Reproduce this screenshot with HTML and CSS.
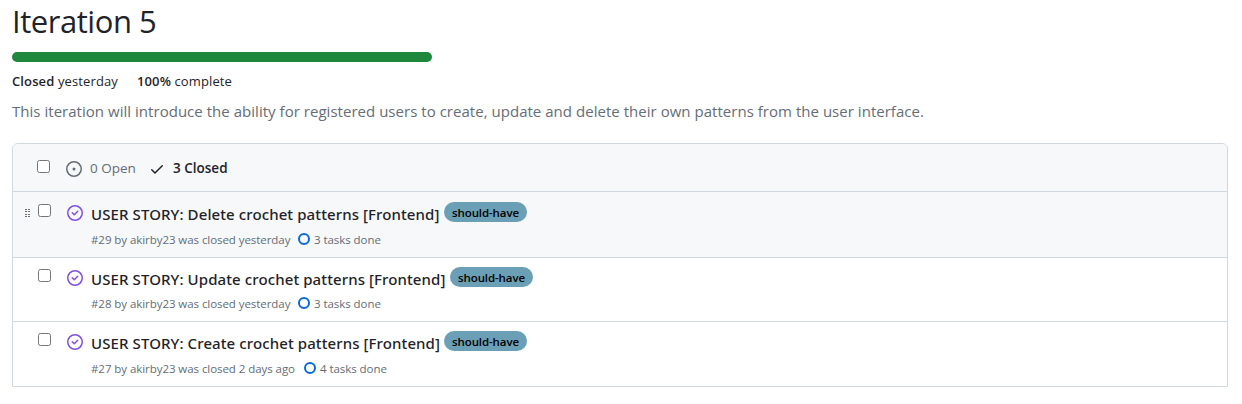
FILE: index.html
```
<!DOCTYPE html>
<html lang="en">
<head>
<meta charset="utf-8">
<title>Iteration 5</title>
<link rel="stylesheet" href="styles.css">
</head>
<body>
<svg class="defs" width="0" height="0" aria-hidden="true">
  <symbol id="issue-closed" viewBox="0 0 16 16"><path d="M11.28 6.78a.75.75 0 0 0-1.06-1.06L7.25 8.69 5.78 7.22a.75.75 0 0 0-1.06 1.06l2 2a.75.75 0 0 0 1.06 0l3.5-3.5Z"/><path d="M16 8A8 8 0 1 1 0 8a8 8 0 0 1 16 0Zm-1.5 0a6.5 6.5 0 1 0-13 0 6.5 6.5 0 0 0 13 0Z"/></symbol>
  <symbol id="issue-open" viewBox="0 0 16 16"><path d="M8 9.5a1.5 1.5 0 1 0 0-3 1.5 1.5 0 0 0 0 3Z"/><path d="M8 0a8 8 0 1 1 0 16A8 8 0 0 1 8 0ZM1.5 8a6.5 6.5 0 1 0 13 0 6.5 6.5 0 0 0-13 0Z"/></symbol>
  <symbol id="check" viewBox="0 0 16 16"><path d="M13.78 4.22a.75.75 0 0 1 0 1.06l-7.25 7.25a.75.75 0 0 1-1.06 0L2.22 9.28a.751.751 0 0 1 .018-1.042.751.751 0 0 1 1.042-.018L6 10.94l6.72-6.72a.75.75 0 0 1 1.06 0Z"/></symbol>
  <symbol id="grip" viewBox="0 0 6 10"><path d="M0 1h2v1H0zM3 1h2v1H3zM0 3h2v1H0zM3 3h2v1H3zM0 6h2v1H0zM3 6h2v1H3zM0 8h2v1H0zM3 8h2v1H3z"/></symbol>
</svg>
<main class="page">
  <h1 class="title"><span>Iteration 5</span></h1>
  <div class="progress"></div>
  <div class="stats"><span class="closed"><b>Closed</b> yesterday</span><span class="complete"><b>100%</b> complete</span></div>
  <p class="description"><span>This iteration will introduce the ability for registered users to create, update and delete their own patterns from the user interface.</span></p>
  <section class="box">
    <header class="box-header">
      <input class="check-all" type="checkbox" aria-label="Select all">
      <a class="state state-open"><svg class="icon"><use href="#issue-open"/></svg><span>0 Open</span></a>
      <a class="state state-closed"><svg class="icon"><use href="#check"/></svg><span>3 Closed</span></a>
    </header>
    <article class="row row-first">
      <svg class="grip"><use href="#grip"/></svg>
      <input class="select" type="checkbox" aria-label="Select issue">
      <svg class="icon issue"><use href="#issue-closed"/></svg>
      <div class="body">
        <div class="line"><a class="name name-delete">USER STORY: Delete crochet patterns [Frontend]</a><span class="label"><span>should-have</span></span></div>
        <div class="meta"><span class="by">#29 by akirby23 was closed yesterday</span><i class="ring"></i><span class="tasks">3 tasks done</span></div>
      </div>
    </article>
    <article class="row row-second">
      <input class="select" type="checkbox" aria-label="Select issue">
      <svg class="icon issue"><use href="#issue-closed"/></svg>
      <div class="body">
        <div class="line"><a class="name name-update">USER STORY: Update crochet patterns [Frontend]</a><span class="label"><span>should-have</span></span></div>
        <div class="meta"><span class="by">#28 by akirby23 was closed yesterday</span><i class="ring"></i><span class="tasks">3 tasks done</span></div>
      </div>
    </article>
    <article class="row row-third">
      <input class="select" type="checkbox" aria-label="Select issue">
      <svg class="icon issue"><use href="#issue-closed"/></svg>
      <div class="body">
        <div class="line"><a class="name name-create">USER STORY: Create crochet patterns [Frontend]</a><span class="label"><span>should-have</span></span></div>
        <div class="meta"><span class="by by-days">#27 by akirby23 was closed 2 days ago</span><i class="ring"></i><span class="tasks">4 tasks done</span></div>
      </div>
    </article>
  </section>
</main>
</body>
</html>
```
FILE: styles.css
```
* { box-sizing: border-box; }
body { margin: 0; background: #fff; color: #1f2328; font-family: "Open Sans", "Noto Sans", sans-serif; font-size: 14px; white-space: nowrap; }
.defs { display: block; height: 0; }
.page { padding: 0 14px 0 12px; }
.title { margin: 0; height: 52px; padding-top: 1px; font-size: 31px; line-height: 40px; font-weight: 400; letter-spacing: -0.45px; }
.progress { width: 420px; height: 10px; border-radius: 5px; background: #1f883d; }
.stats { display: flex; height: 38px; padding-top: 9px; font-size: 13px; line-height: 20px; }
.stats b { font-weight: 600; }
.closed { width: 125px; letter-spacing: 0.12px; }
.complete { letter-spacing: 0.12px; }
.description { margin: 0; height: 43px; font-size: 15px; line-height: 22px; letter-spacing: 0.03px; color: #656d76; }
.box { height: 244px; border: 1px solid #d0d7de; border-radius: 6px 6px 0 0; overflow: hidden; }
.box-header { display: flex; height: 48px; padding-left: 24px; border-bottom: 1px solid #d0d7de; background: #f6f8fa; }
input { flex: none; width: 13px; height: 13px; margin: 0; }
.check-all { margin-top: 16px; }
.icon { flex: none; width: 16px; height: 16px; fill: currentColor; }
.state { display: flex; gap: 8px; font-size: 13.5px; line-height: 20px; }
.state .icon { margin-top: 17px; }
.state span { margin-top: 14px; }
.state-open { width: 83px; margin-left: 16px; color: #656d76; }
.state-closed { font-weight: 600; }
.row { position: relative; display: flex; height: 64px; padding-left: 25px; border-top: 1px solid #d0d7de; }
.row-first { height: 65px; padding-top: 1px; border-top: 0; background: #f6f8fa; }
.row-third { height: 65px; }
.grip { position: absolute; left: 12px; top: 16px; width: 6px; height: 10px; fill: #656d76; }
.select { margin-top: 11px; }
.issue { margin: 12px 8px 0 16px; color: #8250df; }
.line { display: flex; height: 34px; }
.name { width: 353px; padding-top: 10px; font-family: "Noto Sans", "Open Sans", sans-serif; font-size: 15px; line-height: 23px; font-weight: 500; letter-spacing: 0.1px; }
.name-update { width: 359px; }
.label { width: 83px; height: 20px; margin-top: 9px; border-radius: 10px; background: #6a9fb5; color: #000; font-size: 11.5px; line-height: 22px; font-weight: 600; text-align: center; letter-spacing: -0.1px; }
.meta { display: flex; height: 24px; padding-top: 3px; color: #656d76; font-size: 11.5px; line-height: 20px; letter-spacing: -0.06px; }
.by { width: 207px; }
.by-days { width: 213px; }
.row-second .meta { padding-top: 2px; }
.ring { width: 12px; height: 12px; margin: 2px 4px 0 0; border: 2px solid #0969da; border-radius: 50%; position: relative; top: 1px; }
```
